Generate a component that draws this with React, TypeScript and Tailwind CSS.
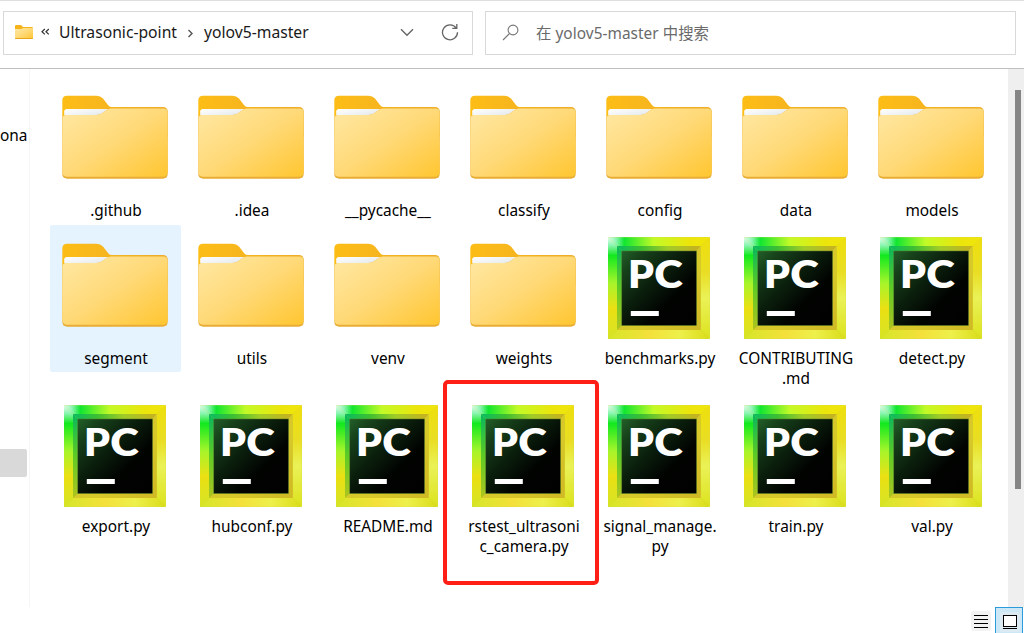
import React from "react";

type Entry = { name: string; lines: string[]; kind: "folder" | "py"; selected?: boolean; marked?: boolean };

const rows: { height: string; entries: Entry[] }[] = [
  {
    height: "h-[148px]",
    entries: [
      { name: "github", lines: [".github"], kind: "folder" },
      { name: "idea", lines: [".idea"], kind: "folder" },
      { name: "pycache", lines: ["__pycache__"], kind: "folder" },
      { name: "classify", lines: ["classify"], kind: "folder" },
      { name: "config", lines: ["config"], kind: "folder" },
      { name: "data", lines: ["data"], kind: "folder" },
      { name: "models", lines: ["models"], kind: "folder" },
    ],
  },
  {
    height: "h-[168px]",
    entries: [
      { name: "segment", lines: ["segment"], kind: "folder", selected: true },
      { name: "utils", lines: ["utils"], kind: "folder" },
      { name: "venv", lines: ["venv"], kind: "folder" },
      { name: "weights", lines: ["weights"], kind: "folder" },
      { name: "benchmarks", lines: ["benchmarks.py"], kind: "py" },
      { name: "contributing", lines: ["CONTRIBUTING", ".md"], kind: "py" },
      { name: "detect", lines: ["detect.py"], kind: "py" },
    ],
  },
  {
    height: "h-[168px]",
    entries: [
      { name: "export", lines: ["export.py"], kind: "py" },
      { name: "hubconf", lines: ["hubconf.py"], kind: "py" },
      { name: "readme", lines: ["README.md"], kind: "py" },
      { name: "rstest", lines: ["rstest_ultrasoni", "c_camera.py"], kind: "py", marked: true },
      { name: "signal", lines: ["signal_manage.", "py"], kind: "py" },
      { name: "train", lines: ["train.py"], kind: "py" },
      { name: "val", lines: ["val.py"], kind: "py" },
    ],
  },
];

function Gradients() {
  return (
    <svg width="0" height="0" className="absolute">
      <defs>
        <linearGradient id="front" x1="0" y1="0" x2="1" y2="1">
          <stop offset="0" stopColor="#ffe8a4" />
          <stop offset="0.5" stopColor="#ffd977" />
          <stop offset="1" stopColor="#ffc630" />
        </linearGradient>
        <linearGradient id="back" x1="0" y1="0" x2="1" y2="0">
          <stop offset="0" stopColor="#fdbd16" />
          <stop offset="1" stopColor="#eeab28" />
        </linearGradient>
        <linearGradient id="paper" x1="0" y1="0" x2="1" y2="1">
          <stop offset="0" stopColor="#ffffff" />
          <stop offset="1" stopColor="#d9dfe2" />
        </linearGradient>
        <linearGradient id="edgeTop" x1="0" y1="0" x2="1" y2="0">
          <stop offset="0" stopColor="#e6fff2" />
          <stop offset="0.08" stopColor="#8af5b0" />
          <stop offset="0.16" stopColor="#10e630" />
          <stop offset="0.45" stopColor="#c3fa27" />
          <stop offset="0.8" stopColor="#ece50b" />
          <stop offset="1" stopColor="#f1e50c" />
        </linearGradient>
        <linearGradient id="edgeLeft" x1="0" y1="0" x2="0" y2="1">
          <stop offset="0" stopColor="#e6fff2" />
          <stop offset="0.08" stopColor="#8af5b0" />
          <stop offset="0.18" stopColor="#12e91f" />
          <stop offset="0.45" stopColor="#a6f52b" />
          <stop offset="0.7" stopColor="#eae013" />
          <stop offset="1" stopColor="#d6e426" />
        </linearGradient>
        <linearGradient id="edgeRight" x1="0" y1="0" x2="0" y2="1">
          <stop offset="0" stopColor="#efdf0b" />
          <stop offset="0.35" stopColor="#e9de25" />
          <stop offset="0.6" stopColor="#eaf257" />
          <stop offset="1" stopColor="#dce21e" />
        </linearGradient>
        <linearGradient id="edgeBottom" x1="0" y1="0" x2="1" y2="0">
          <stop offset="0" stopColor="#d5e726" />
          <stop offset="0.4" stopColor="#f4e03a" />
          <stop offset="0.7" stopColor="#eef04b" />
          <stop offset="1" stopColor="#d9dc18" />
        </linearGradient>
        <linearGradient id="inTop" x1="0" y1="0" x2="1" y2="0">
          <stop offset="0" stopColor="#06bd62" />
          <stop offset="0.3" stopColor="#3fbf30" />
          <stop offset="0.6" stopColor="#a0cc28" />
          <stop offset="1" stopColor="#c9b020" />
        </linearGradient>
        <linearGradient id="inLeft" x1="0" y1="0" x2="0" y2="1">
          <stop offset="0" stopColor="#06b85d" />
          <stop offset="0.5" stopColor="#5fcb25" />
          <stop offset="1" stopColor="#aec41f" />
        </linearGradient>
        <linearGradient id="inEnd" x1="0" y1="0" x2="1" y2="1">
          <stop offset="0" stopColor="#c9c42a" />
          <stop offset="0.6" stopColor="#d8c92a" />
          <stop offset="1" stopColor="#d0b824" />
        </linearGradient>
        <linearGradient id="dark" x1="0" y1="0" x2="1" y2="1">
          <stop offset="0" stopColor="#236028" />
          <stop offset="0.16" stopColor="#16401a" />
          <stop offset="0.4" stopColor="#0b200d" />
          <stop offset="0.66" stopColor="#010301" />
          <stop offset="1" stopColor="#000000" />
        </linearGradient>
      </defs>
    </svg>
  );
}

function FolderIcon() {
  return (
    <svg width="131" height="123" viewBox="0 0 131 123" className="block shrink-0">
      <path d="M12.3 40V23.5Q12.3 18.8 17 18.8H46.5Q50.5 18.8 53 21.6L58 28Q59.2 30 61.5 30H112.8Q117.7 30 117.7 35V60H12.3Z" fill="url(#back)" />
      <path d="M14.2 42V34.6Q14.2 32 17 32H59.5L66 42Z" fill="url(#paper)" />
      <path d="M12.3 42Q12.3 38 16.5 38H46Q51 38 54.5 34.6Q57.6 31.6 61 31.6H113.5Q117.7 31.6 117.7 36V96.5Q117.7 101.7 112.5 101.7H17.5Q12.3 101.7 12.3 96.5Z" fill="#e9ad35" />
      <path d="M12.3 42Q12.3 38 16.5 38H46Q51 38 54.5 34.6Q57.6 31.6 61 31.6H113.5Q117.7 31.6 117.7 36V94.8Q117.7 99.8 112.5 99.8H17.5Q12.3 99.8 12.3 94.8Z" fill="url(#front)" />
    </svg>
  );
}

function PyIcon() {
  return (
    <svg width="131" height="123" viewBox="0 0 131 123" className="block shrink-0">
      <rect x="14" y="12.2" width="101.8" height="101.6" fill="#c9cf22" />
      <path d="M14 12.2H115.8L106.7 21H23Z" fill="url(#edgeTop)" />
      <path d="M14 12.2L23 21V105L14 113.8Z" fill="url(#edgeLeft)" />
      <path d="M115.8 12.2V113.8L106.7 105V21Z" fill="url(#edgeRight)" />
      <path d="M14 113.8L23 105H106.7L115.8 113.8Z" fill="url(#edgeBottom)" />
      <path d="M23 21H106.7L102.7 26H28Z" fill="url(#inTop)" />
      <path d="M23 21L28 26V100.8L23 105Z" fill="url(#inLeft)" />
      <path d="M106.7 21V105H23L28 100.8H102.7V26Z" fill="url(#inEnd)" />
      <rect x="27.8" y="26" width="74.7" height="74.5" fill="url(#dark)" stroke="#54762a" strokeWidth="0.5" />
      <g fill="#fff" className="font-['Lato'] text-[38.5px] font-extrabold">
        <text x="33.9" y="62.6" textLength="26" lengthAdjust="spacingAndGlyphs">
          P
        </text>
        <text x="60.2" y="62.6" textLength="28.5" lengthAdjust="spacingAndGlyphs">
          C
        </text>
      </g>
      <rect x="36.8" y="86" width="28" height="5" fill="#fff" />
    </svg>
  );
}

function FileItem({ entry }: { entry: Entry }) {
  return (
    <div className="relative w-[131px]">
      <div className={entry.selected ? "flex h-[147px] flex-col rounded-[2px] bg-[#e5f3ff]" : "flex flex-col"}>
        {entry.kind === "folder" ? <FolderIcon /> : <PyIcon />}
        <div className="flex flex-col items-center pt-px pl-px text-[15.4px] leading-5">
          {entry.lines.map((line) => (
            <span key={line} className="whitespace-nowrap">
              {line}
            </span>
          ))}
        </div>
      </div>
      {entry.marked && (
        <div className="absolute -top-[13px] -left-[15px] h-[205px] w-[156px] rounded-[5px] border-4 border-[#ff1f16]" />
      )}
    </div>
  );
}

function AddressBar() {
  return (
    <div className="flex h-11 w-[470px] items-center border border-[#d9d9d9] text-[15.7px]">
      <svg width="18" height="15" viewBox="0 0 18 15" className="-mt-px ml-[11px] shrink-0">
        <path d="M0 12V1.2Q0 0 1.2 0H6L8 2H16.8Q18 2 18 3.2V12Z" fill="#f5b31c" />
        <path d="M0 4H6.5L8 3H18V13.3Q18 14 17 14H1Q0 14 0 13.3Z" fill="url(#front)" />
        <path d="M0.3 13.5H17.7" stroke="#e8a520" strokeWidth="1" />
      </svg>
      <svg width="9" height="8" viewBox="0 0 9 8" className="-mt-[3px] ml-2 shrink-0" fill="none" stroke="#333" strokeWidth="1.2">
        <path d="M3.8 1L1 3.7L3.8 6.4M7.8 1L5 3.7L7.8 6.4" />
      </svg>
      <span className="ml-[9px] w-[119px] whitespace-nowrap text-[#1a1a1a]">Ultrasonic-point</span>
      <svg width="7" height="9" viewBox="0 0 7 9" className="ml-[9px] shrink-0" fill="none" stroke="#555" strokeWidth="1.4">
        <path d="M1.5 1L5 4.5L1.5 8" />
      </svg>
      <span className="ml-[10px] w-[106px] whitespace-nowrap text-[#1a1a1a]">yolov5-master</span>
      <svg width="14" height="9" viewBox="0 0 14 9" className="-mt-px ml-[90px] shrink-0" fill="none" stroke="#666" strokeWidth="1.4">
        <path d="M1 1.3L7 7.2L13 1.3" />
      </svg>
      <svg width="18" height="18" viewBox="0 0 18 18" className="-mt-[3px] ml-[27px] shrink-0" fill="none" stroke="#666" strokeWidth="1.3">
        <path d="M15.2 5.1A7.5 7.5 0 1 0 16.5 9.2M15.8 1V5.3H11.3" />
      </svg>
    </div>
  );
}

function SearchBox() {
  return (
    <div className="ml-3 flex h-11 w-[531px] items-center border border-[#d9d9d9] text-[15.4px] text-[#6a6a6a]">
      <svg width="17" height="17" viewBox="0 0 17 17" className="-mt-[2px] ml-4 shrink-0" fill="none" stroke="#777" strokeWidth="1.1">
        <circle cx="11" cy="6" r="4.9" />
        <path d="M7.5 9.5L1 16" />
      </svg>
      <span className="mt-[2px] ml-[17px] whitespace-nowrap tracking-[0.04px]">在 yolov5-master 中搜索</span>
    </div>
  );
}

export default function App() {
  return (
    <div className="flex h-[633px] w-[1024px] flex-col overflow-hidden bg-white font-['Noto_Sans','Noto_Sans_CJK_SC',sans-serif] text-black">
      <Gradients />
      <header className="flex h-[69px] shrink-0 border-t border-b border-t-[#dedede] border-b-[#bfbfbf] pt-[10px] pl-[3px]">
        <AddressBar />
        <SearchBox />
      </header>
      <div className="flex h-[538px] shrink-0">
        <nav className="flex w-[30px] shrink-0 flex-col border-r border-[#f5f5f5]">
          <span className="mt-[57px] text-[15.4px] leading-5">ona</span>
          <div className="mt-[303px] h-7 w-[27px] rounded-r-[2px] bg-[#d9d9d9]" />
        </nav>
        <main className="flex flex-1 flex-col pt-2 pl-5">
          {rows.map((row, i) => (
            <div key={i} className={"flex gap-[5px] " + row.height}>
              {row.entries.map((entry) => (
                <FileItem key={entry.name} entry={entry} />
              ))}
            </div>
          ))}
        </main>
        <div className="flex w-4 shrink-0 flex-col items-end bg-[#efefef] pt-[21px] pr-[3px]">
          <div className="h-[399px] w-[6px] bg-[#858585]" />
        </div>
      </div>
      <footer className="flex h-[26px] shrink-0 justify-end pr-px">
        <div className="mt-1 mr-1 flex h-5 w-5 flex-col items-center gap-[3px] rounded-[2px] bg-[#f3f3f3] pt-1">
          <div className="h-px w-[14px] shrink-0 bg-black" />
          <div className="h-px w-[14px] shrink-0 bg-black" />
          <div className="h-px w-[14px] shrink-0 bg-black" />
          <div className="h-px w-[14px] shrink-0 bg-black" />
        </div>
        <div className="flex w-7 justify-center border border-b-0 border-[#2b9bdc] bg-[#cce8f7] pt-1 pl-px">
          <div className="flex h-5 w-5 flex-col items-center rounded-[2px] bg-[#dcebf3] pt-[3px]">
            <div className="h-3 w-[14px] shrink-0 border border-black bg-white" />
            <div className="mt-px h-px w-[14px] shrink-0 bg-black" />
          </div>
        </div>
      </footer>
    </div>
  );
}
